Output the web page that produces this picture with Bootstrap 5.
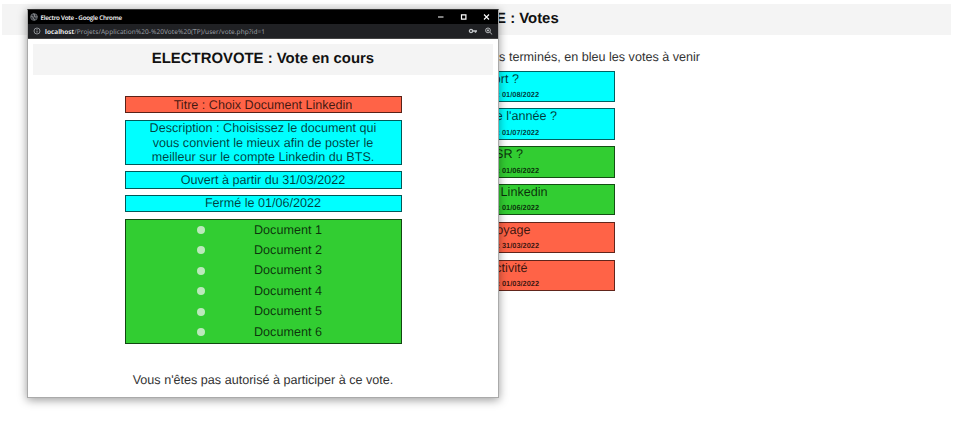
<!DOCTYPE html>
<html lang="fr">
<head>
<meta charset="utf-8">
<title>Electro Vote</title>
<link href="https://cdn.jsdelivr.net/npm/bootstrap@5.3.0/dist/css/bootstrap.min.css" rel="stylesheet">
<style>
body{font-family:"Liberation Sans",Arial,sans-serif;font-size:12.6px;line-height:14.4px;color:#333;background:#fff;width:954px;height:435px;overflow:hidden;text-rendering:geometricPrecision}
.page{padding:4px 3px 0 2px}
.page-title{background:#f4f4f4;height:31px;font-size:14.9px;font-weight:700;color:#111;line-height:1;margin:0}
.legend{padding-right:251px;margin:15px 0 5.6px;line-height:15px}
.votes{width:277px;gap:6.3px}
.vote{height:31.5px;border:1px solid rgba(0,0,0,.62);line-height:15px;color:rgba(0,0,0,.78)}
.vote small{font-size:7.4px;font-weight:700;line-height:8px;padding-right:75px;margin-top:4.4px}
.red{background:#ff6347}.blue{background:#0ff}.green{background:#32cd32}
.e1{padding-right:95px}.e2{padding-right:57px}.e3{padding-right:91px}.e4{padding-right:66.5px}.e5{padding-right:83.5px}.e6{padding-right:86.5px}
.popup{left:27px;top:9px;width:472px;height:389px;border:1px solid #aaa;border-top-color:#333;background:#fff;box-shadow:0 2px 9px rgba(0,0,0,.4)}
.titlebar{height:14px;background:#000;color:#fff;font:600 6.3px "Open Sans","Noto Sans",sans-serif;letter-spacing:-.27px;padding:0 8px 0 2px}
.window-icon{margin-right:2.5px}
.address{height:15px;background:#202124;border-bottom:1px solid #444;color:#999da2;font:6.5px "Noto Sans",sans-serif;letter-spacing:.06px;padding:0 5px}
.address b{color:#fff;font-weight:600}
.popup-body{padding:5px 5px 0}
.poll{width:277px;gap:6.3px;margin-top:21px}
.field{border:1px solid rgba(0,0,0,.65);color:rgba(0,0,0,.76);padding:.5px 18px;height:17.3px}
.description{height:45.5px}
.choices{height:125px;padding:0 0 0 71px}
.choice{height:20.45px;gap:49.5px}
.radio-dot{width:8px;height:8px;background:#bce8bc}
.message{margin-top:29.3px}
svg{display:block}
</style>
<script src="https://cdn.jsdelivr.net/npm/bootstrap@5.3.0/dist/js/bootstrap.bundle.min.js"></script>
</head>
<body>
<main class="page">
  <h1 class="page-title d-flex align-items-center justify-content-center">ELECTROVOTE : Votes</h1>
  <p class="legend text-end">es terminés, en bleu les votes à venir</p>
  <div class="votes d-flex flex-column mx-auto text-end">
    <div class="vote blue"><div class="e1">ort ?</div><small class="d-block">: 01/08/2022</small></div>
    <div class="vote blue"><div class="e2">e l'année ?</div><small class="d-block">: 01/07/2022</small></div>
    <div class="vote green"><div class="e3">SR ?</div><small class="d-block">: 01/06/2022</small></div>
    <div class="vote green"><div class="e4">Linkedin</div><small class="d-block">: 01/06/2022</small></div>
    <div class="vote red"><div class="e5">oyage</div><small class="d-block">: 31/03/2022</small></div>
    <div class="vote red"><div class="e6">ctivité</div><small class="d-block">: 01/03/2022</small></div>
  </div>
</main>
<section class="popup position-absolute">
  <div class="titlebar d-flex align-items-center justify-content-between">
    <div class="d-flex align-items-center">
      <svg class="window-icon" width="8" height="8" viewBox="0 0 8 8"><circle cx="4" cy="4" r="3.4" fill="#30343a" stroke="#777c82" stroke-width=".7"/><path d="M1 3l2 1 .4 2L5 7M3 .8l2 1-1 1.4 2 1 1.3-.6" fill="none" stroke="#999" stroke-width=".8"/></svg>
      <span>Electro Vote - Google Chrome</span>
    </div>
    <svg width="53" height="8" viewBox="0 0 53 8" fill="none" stroke="#fff"><path d="M1 4h5.5"/><path d="M24.5 1.8h4.4v4.4h-4.4z" stroke-width="1.2"/><path d="M47 1.5l5 5M52 1.5l-5 5" stroke-width="1.1"/></svg>
  </div>
  <div class="address d-flex align-items-center justify-content-between">
    <div class="d-flex align-items-center">
      <svg width="8" height="8" viewBox="0 0 8 8" fill="none" stroke="#a6a9ad"><circle cx="4" cy="4" r="3" stroke-width=".8"/><path d="M4 3.6v2M4 2v.8" stroke-width=".9"/></svg>
      <span class="ms-1"><b>localhost</b>/Projets/Application%20-%20Vote%20(TP)/user/vote.php?id=1</span>
    </div>
    <svg width="25" height="8" viewBox="0 0 25 8" fill="none" stroke="#c5c8cb"><circle cx="3" cy="4" r="1.6" stroke-width="1.3"/><path d="M4.6 4H9M7.5 4v1.7" stroke-width="1.4"/><circle cx="20" cy="3.4" r="2.4" stroke-width=".9"/><path d="M21.8 5.2l2.4 2.3M18.8 3.4h2.4M20 2.2v2.4" stroke-width=".9"/></svg>
  </div>
  <div class="popup-body">
    <h2 class="page-title d-flex align-items-center justify-content-center">ELECTROVOTE : Vote en cours</h2>
    <div class="poll d-flex flex-column mx-auto text-center">
      <div class="field red">Titre : Choix Document Linkedin</div>
      <div class="field description blue">Description : Choisissez le document qui<br>vous convient le mieux afin de poster le<br>meilleur sur le compte Linkedin du BTS.</div>
      <div class="field blue">Ouvert à partir du 31/03/2022</div>
      <div class="field blue">Fermé le 01/06/2022</div>
      <div class="field choices green">
        <div class="choice d-flex align-items-center"><span class="radio-dot rounded-circle"></span><span>Document 1</span></div>
        <div class="choice d-flex align-items-center"><span class="radio-dot rounded-circle"></span><span>Document 2</span></div>
        <div class="choice d-flex align-items-center"><span class="radio-dot rounded-circle"></span><span>Document 3</span></div>
        <div class="choice d-flex align-items-center"><span class="radio-dot rounded-circle"></span><span>Document 4</span></div>
        <div class="choice d-flex align-items-center"><span class="radio-dot rounded-circle"></span><span>Document 5</span></div>
        <div class="choice d-flex align-items-center"><span class="radio-dot rounded-circle"></span><span>Document 6</span></div>
      </div>
    </div>
    <p class="message text-center mb-0">Vous n'êtes pas autorisé à participer à ce vote.</p>
  </div>
</section>
</body>
</html>
